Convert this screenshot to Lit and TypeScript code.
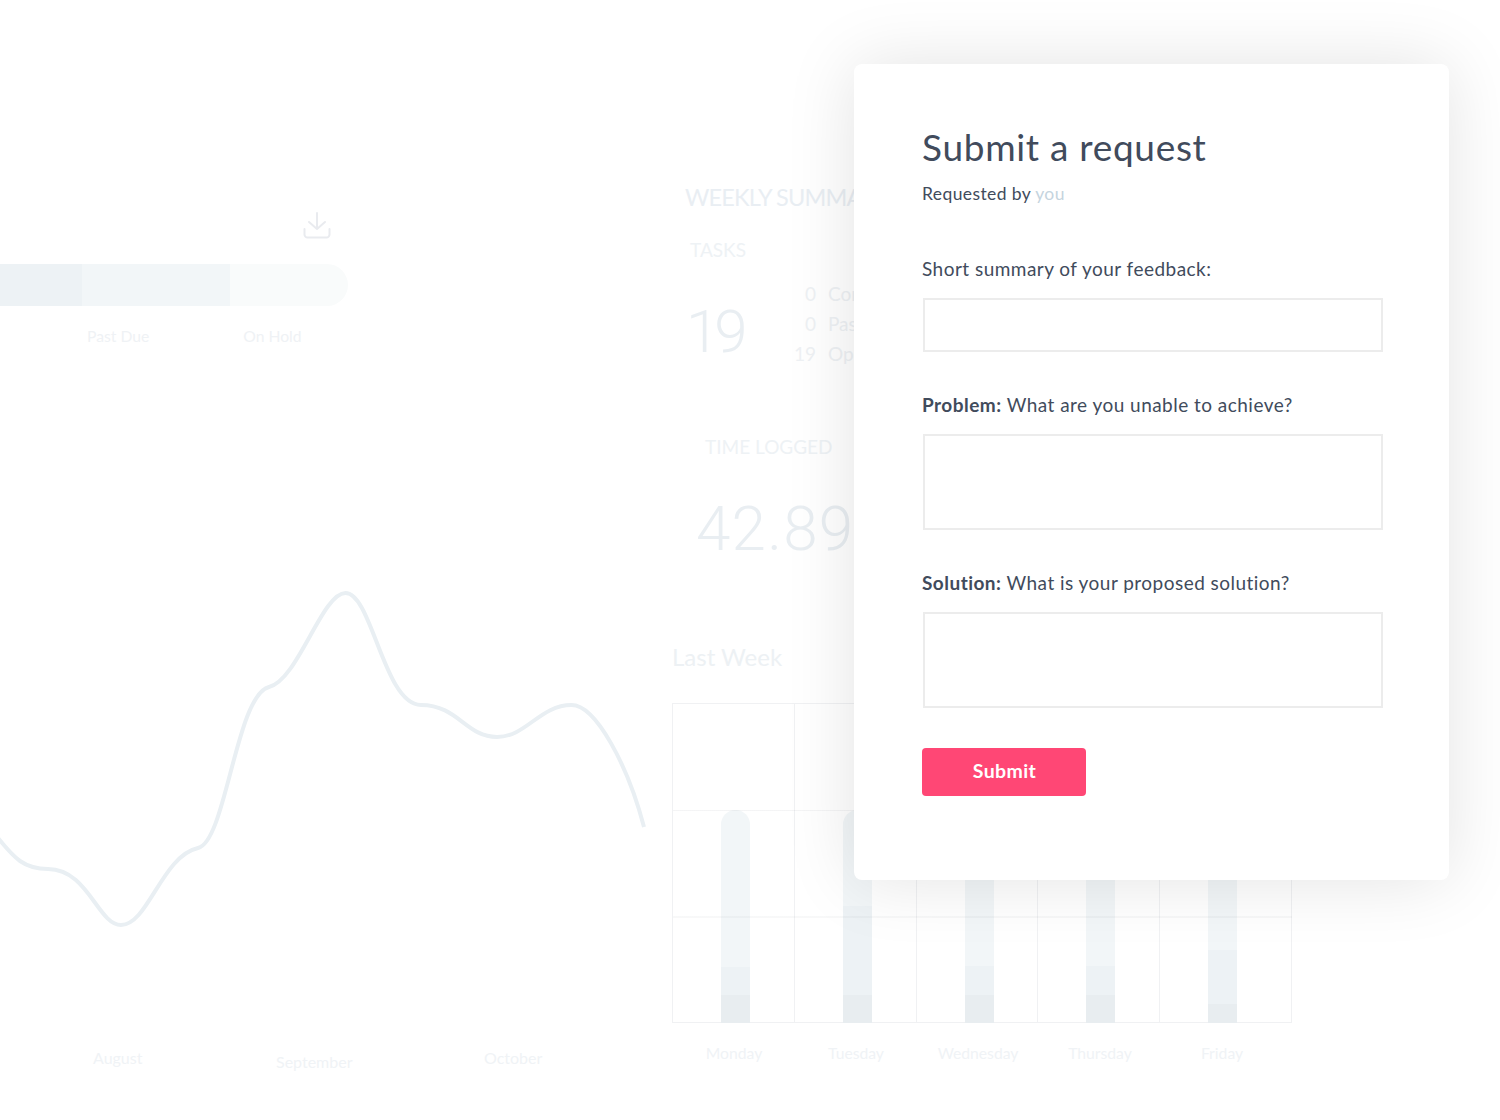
import { LitElement, html, css } from "lit";
import { customElement } from "lit/decorators.js";

const days = [
  { name: "Monday", segs: [157, 28, 28] },
  { name: "Tuesday", segs: [96, 89, 28] },
  { name: "Wednesday", segs: [156, 29, 28] },
  { name: "Thursday", segs: [156, 29, 28] },
  { name: "Friday", segs: [140, 54, 19] },
];
const segClass = ["s1", "s2", "s3"];

@customElement("app-root")
export class AppRoot extends LitElement {
  static styles = css`
    :host {
      display: block;
      position: relative;
      width: 1500px;
      height: 1120px;
      overflow: hidden;
      background: #fff;
      font-family: Lato, "Open Sans", sans-serif;
      color: #414b5c;
    }
    .bg {
      display: grid;
      grid-template-columns: 672px 1fr;
      height: 1120px;
      color: #e9eef2;
    }
    .left { padding-top: 211px; }
    .dl { display: flex; justify-content: flex-end; width: 331px; height: 30px; }
    .stack { display: flex; width: 348px; height: 42px; margin-top: 23px; }
    .stack div { height: 100%; }
    .a { width: 82px; background: #edf2f5; }
    .b { width: 148px; background: #f2f6f8; }
    .c { width: 118px; background: #f9fbfb; border-radius: 0 21px 21px 0; }
    .stack-labels {
      display: flex; gap: 94px; padding-left: 87px; margin-top: 20px;
      font-size: 15.7px; line-height: 20px; color: #eff2f5;
    }
    .line { display: block; margin-top: 244px; }
    .months {
      display: flex; align-items: flex-start; padding-left: 93px; margin-top: 1px;
      font-size: 16px; line-height: 20px; color: #f0f3f6;
    }
    .months span:nth-child(1) { width: 183px; }
    .months span:nth-child(2) { width: 208px; margin-top: 4px; }

    .right { padding-top: 182px; overflow: hidden; }
    .weekly { font-size: 23.5px; line-height: 30px; padding-left: 13px; white-space: nowrap; letter-spacing: -0.8px; color: #e9eef3; }
    .tasks-h { font-size: 19px; line-height: 24px; padding-left: 18px; margin-top: 26px; color: #eef2f5; }
    .tasks { display: flex; padding-left: 18px; margin-top: 17px; }
    .big19 { font-family: Roboto, sans-serif; font-size: 60px; font-weight: 300; line-height: 90px; width: 104px; margin-top: 8px; margin-left: -4px; letter-spacing: -5px; color: #e9eef2; }
    .rows { display: grid; grid-template-columns: 26px auto; column-gap: 12px; grid-auto-rows: 30px; font-size: 19px; line-height: 30px; color: #eef1f4; white-space: nowrap; }
    .rows b { font-weight: 400; text-align: right; }
    .time-h { font-size: 19px; line-height: 24px; padding-left: 33px; margin-top: 58px; color: #eef2f5; }
    .hours { font-family: Roboto, sans-serif; font-size: 62px; font-weight: 300; line-height: 74px; padding-left: 24px; margin-top: 33px; letter-spacing: 1.2px; color: #e9eef2; }
    .lw { font-size: 24px; line-height: 30px; margin-top: 76px; color: #edf1f4; }
    .plot {
      position: relative;
      display: flex; box-sizing: border-box;
      width: 620px; height: 320px; margin-top: 31px;
      border: 1px solid #f0f1f3; border-right: none;
    }
    .plot::after {
      content: "";
      position: absolute; inset: 0;
      background:
        linear-gradient(rgba(70, 80, 90, 0.06), rgba(70, 80, 90, 0.06)) 0 106px / 100% 1px no-repeat,
        linear-gradient(rgba(70, 80, 90, 0.04), rgba(70, 80, 90, 0.04)) 0 212px / 100% 2px no-repeat;
    }
    .col {
      width: 122px; box-sizing: border-box; padding-left: 48px;
      border-right: 1px solid #f0f1f3;
      display: flex; flex-direction: column; justify-content: flex-end;
    }
    .col:last-child { width: 132px; }
    .seg { width: 29px; flex: none; }
    .seg.s1 { background: #f2f6f8; border-radius: 14.5px 14.5px 0 0; }
    .seg.s2 { background: #edf2f5; }
    .seg.s3 { background: #e8edf0; margin-bottom: -1px; }
    .days {
      display: flex; margin-top: 20px; padding-left: 1px; font-size: 15.7px; line-height: 20px; color: #f0f3f6;
    }
    .days span { width: 122px; text-align: center; }

    .modal {
      position: absolute; left: 854px; top: 64px; width: 595px; height: 816px;
      box-sizing: border-box; padding: 59px 66px 0 68px;
      background: #fff; border-radius: 8px;
      box-shadow: 0 0 70px rgba(0, 0, 0, 0.115);
    }
    h1 { margin: 0; font-size: 37px; font-weight: 400; line-height: 48px; letter-spacing: 0.7px; color: #414b5c; }
    .by { font-size: 17.5px; line-height: 24px; margin-top: 11px; letter-spacing: 0.4px; }
    .by span { color: #c5d4de; }
    .field { display: block; margin-top: 41px; }
    .field:first-of-type { margin-top: 51px; }
    .field .t { display: block; font-size: 19px; line-height: 24px; margin-bottom: 17px; letter-spacing: 0.47px; }
    input, textarea {
      display: block; box-sizing: border-box; width: 460px; margin: 0 0 0 1px;
      border: 2px solid #ececec; border-radius: 0; background: #fff; outline: none; resize: none;
      font: inherit; padding: 8px;
    }
    input { height: 54px; }
    textarea { height: 96px; }
    button {
      display: block; width: 164px; height: 48px; margin-top: 40px; border: none; border-radius: 4px;
      background: #ff4775; color: #fff; font: 700 19.5px/46px Lato, sans-serif; letter-spacing: 0.4px; padding: 0 0 2px 1px;
    }
  `;

  render() {
    return html`
      <div class="bg">
        <section class="left">
          <div class="dl">
            <svg width="28" height="30" viewBox="0 0 28 30" fill="none" stroke="#e9ebef" stroke-width="2" stroke-linecap="round" stroke-linejoin="round">
              <path d="M14 2V18M6 11l8 7 8-7" />
              <path d="M1.5 18v5.5a3 3 0 0 0 3 3h19a3 3 0 0 0 3-3V18" />
            </svg>
          </div>
          <div class="stack"><div class="a"></div><div class="b"></div><div class="c"></div></div>
          <div class="stack-labels"><span>Past Due</span><span>On Hold</span></div>
          <svg class="line" width="660" height="457" viewBox="0 590 660 457" fill="none">
            <path stroke="#e9eff3" stroke-width="4"
              d="M-2 838C14 858 24 869 48 869C88 869 98 925 121 925C148 925 162 856 198 848C226 842 236 695 269 687C298 680 322 593 345.5 593C372 593 384 705 421 705C458 705 466 737 497 737C526 737 540 705 571.5 705C596 705 628 766 644 827" />
          </svg>
          <div class="months"><span>August</span><span>September</span><span>October</span></div>
        </section>
        <section class="right">
          <div class="weekly">WEEKLY SUMMARY</div>
          <div class="tasks-h">TASKS</div>
          <div class="tasks">
            <div class="big19">19</div>
            <div class="rows">
              <b>0</b><span>Completed</span>
              <b>0</b><span>Past Due</span>
              <b>19</b><span>Open</span>
            </div>
          </div>
          <div class="time-h">TIME LOGGED</div>
          <div class="hours">42.89</div>
          <div class="lw">Last Week</div>
          <div class="plot">
            ${days.map(
              (d) => html`<div class="col">
                ${d.segs.map((h, i) => html`<div class="seg ${segClass[i]}" style="height:${h}px"></div>`)}
              </div>`
            )}
          </div>
          <div class="days">${days.map((d) => html`<span>${d.name}</span>`)}</div>
        </section>
      </div>
      <form class="modal" @submit=${(e: Event) => e.preventDefault()}>
        <h1>Submit a request</h1>
        <div class="by">Requested by <span>you</span></div>
        <label class="field"><span class="t">Short summary of your feedback:</span><input type="text" /></label>
        <label class="field"><span class="t"><strong>Problem:</strong> What are you unable to achieve?</span><textarea></textarea></label>
        <label class="field"><span class="t"><strong>Solution:</strong> What is your proposed solution?</span><textarea></textarea></label>
        <button type="submit">Submit</button>
      </form>
    `;
  }
}
